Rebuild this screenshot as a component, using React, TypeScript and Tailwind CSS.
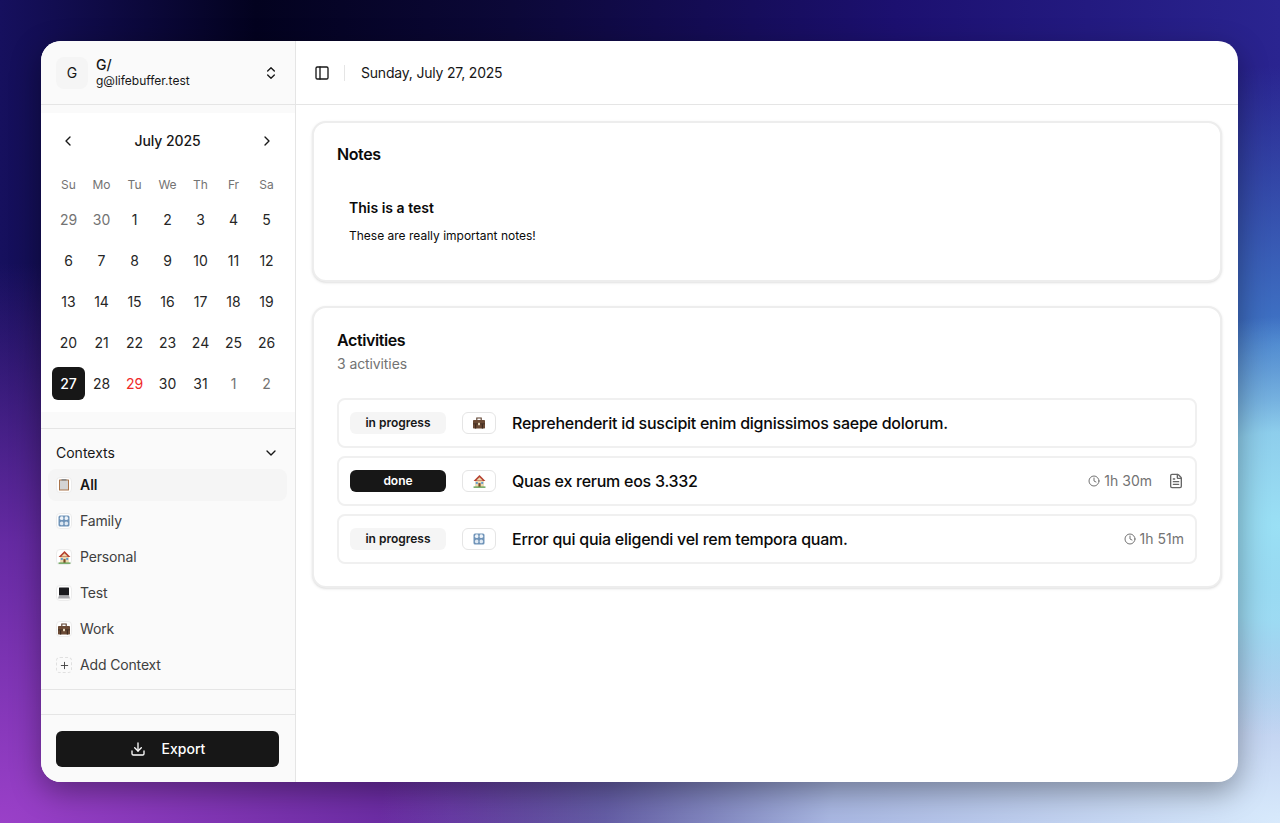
import { ChevronDown, ChevronLeft, ChevronRight, ChevronsUpDown, Clock, Download, FileText, PanelLeft, Plus } from "lucide-react";
import type { ReactNode } from "react";

function Clipboard() {
  return (
    <svg viewBox="0 0 12 12" className="w-[12px] h-[12px]">
      <rect x="1" y="0.5" width="10" height="11" rx="0.6" fill="#a9744a" />
      <rect x="2" y="1.5" width="8" height="9" fill="#d4d4d4" />
      <rect x="3.5" y="0" width="5" height="1.6" fill="#8a8a8a" />
    </svg>
  );
}

function People() {
  return (
    <svg viewBox="0 0 12 12" className="w-[12px] h-[12px]">
      <rect x="0.5" y="0.5" width="11" height="11" rx="1.5" fill="#6f93b8" />
      <circle cx="3.8" cy="3.2" r="1.9" fill="#eef4fa" />
      <circle cx="8.2" cy="3.2" r="1.9" fill="#eef4fa" />
      <circle cx="3.8" cy="8.4" r="1.9" fill="#dfe9f3" />
      <circle cx="8.2" cy="8.4" r="1.9" fill="#dfe9f3" />
      <rect x="5.5" y="1" width="1" height="10" fill="#6f93b8" />
    </svg>
  );
}

function House() {
  return (
    <svg viewBox="0 0 12 12" className="w-[13px] h-[13px]">
      <rect x="2" y="4.5" width="8" height="6.5" fill="#ecd9b0" />
      <path d="M6 0 L11.5 5.5 H0.5 Z" fill="#b5402f" />
      <path d="M6 2 L9 5 H3 Z" fill="#ecd9b0" />
      <rect x="5" y="7.5" width="2" height="3.5" fill="#7a4a28" />
      <rect x="2.6" y="6.4" width="1.8" height="1.8" fill="#5f9bd0" />
      <rect x="7.6" y="6.4" width="1.8" height="1.8" fill="#5f9bd0" />
      <rect x="0.5" y="10.6" width="11" height="1.2" fill="#5a9a4a" />
    </svg>
  );
}

function Laptop() {
  return (
    <svg viewBox="0 0 12 12" className="w-[12px] h-[12px]">
      <rect x="1" y="0.5" width="10" height="8" rx="0.5" fill="#1b1b1f" />
      <path d="M1 8.5 H11 L12 11.5 H0 Z" fill="#a8a8ac" />
    </svg>
  );
}

function Briefcase() {
  return (
    <svg viewBox="0 0 12 12" className="w-[12px] h-[12px]">
      <path d="M3.8 3 V1 H8.2 V3" fill="none" stroke="#5a3d2b" strokeWidth="1.1" />
      <rect x="0" y="3" width="12" height="8.5" rx="0.7" fill="#6b4a35" />
      <rect x="0" y="6.5" width="12" height="0.8" fill="#3d2a1e" />
      <rect x="2" y="7.3" width="1.2" height="4.2" fill="#3d2a1e" />
      <rect x="8.8" y="7.3" width="1.2" height="4.2" fill="#3d2a1e" />
      <rect x="5" y="5.8" width="2" height="2.4" fill="#e0d2b4" />
    </svg>
  );
}

function IconTile({ children, dashed }: { children: ReactNode; dashed?: boolean }) {
  return (
    <div
      className={
        "w-4 h-4 flex items-center justify-center rounded-[4px] border shrink-0 " +
        (dashed ? "border-dashed border-[#e0e0e0] bg-transparent" : "border-[#ececec] bg-white")
      }
    >
      {children}
    </div>
  );
}

const weeks = [
  ["29", "30", "1", "2", "3", "4", "5"],
  ["6", "7", "8", "9", "10", "11", "12"],
  ["13", "14", "15", "16", "17", "18", "19"],
  ["20", "21", "22", "23", "24", "25", "26"],
  ["27", "28", "29", "30", "31", "1", "2"],
];

function Calendar() {
  return (
    <div className="bg-white h-[299px] px-[11px] pt-[11px]">
      <div className="h-[33px] w-[231px] flex items-center justify-between px-[8px] text-[#171717]">
        <ChevronLeft size={16} />
        <div className="text-sm font-medium tracking-[-0.1px]">July 2025</div>
        <ChevronRight size={16} />
      </div>
      <div className="grid grid-cols-7 w-[231px] mt-[18px] h-[20px] items-center text-center text-xs text-[#737373]">
        {["Su", "Mo", "Tu", "We", "Th", "Fr", "Sa"].map((d) => (
          <div key={d}>{d}</div>
        ))}
      </div>
      <div className="flex flex-col gap-2 mt-[8px] w-[231px]">
        {weeks.map((w, i) => (
          <div key={i} className="grid grid-cols-7">
            {w.map((d, j) => {
              const outside = (i === 0 && j < 2) || (i === 4 && j > 4);
              const selected = i === 4 && j === 0;
              const red = i === 4 && j === 2;
              return (
                <div
                  key={j}
                  className={
                    "h-[33px] flex items-center justify-center rounded-md text-sm " +
                    (selected
                      ? "bg-[#171717] text-white font-medium"
                      : red
                        ? "text-[#f02a2a]"
                        : outside
                          ? "text-[#737373]"
                          : "text-[#262626]")
                  }
                >
                  {d}
                </div>
              );
            })}
          </div>
        ))}
      </div>
    </div>
  );
}

const contexts = [
  { name: "Family", icon: <People /> },
  { name: "Personal", icon: <House /> },
  { name: "Test", icon: <Laptop /> },
  { name: "Work", icon: <Briefcase /> },
];

function Sidebar() {
  return (
    <aside className="w-[255px] shrink-0 flex flex-col bg-[#fafafa] border-r border-[#e5e5e5]">
      <div className="h-[64px] shrink-0 flex items-center px-[15px] border-b border-[#e5e5e5]">
        <div className="w-8 h-8 rounded-lg bg-[#f5f5f5] flex items-center justify-center text-sm text-[#171717]">G</div>
        <div className="ml-2 flex-1 leading-none">
          <div className="text-sm font-medium text-[#171717] leading-[17px]">G/</div>
          <div className="text-xs text-[#171717] leading-[16px]">g@lifebuffer.test</div>
        </div>
        <ChevronsUpDown size={16} className="text-[#171717] mr-[1px]" />
      </div>
      <div className="h-[8px] shrink-0" />
      <Calendar />
      <div className="h-[17px] shrink-0 border-b border-[#e5e5e5]" />
      <div className="flex-1 px-[7px] pt-[8px]">
        <div className="h-[32px] flex items-center justify-between px-2 text-sm text-[#171717]">
          <span>Contexts</span>
          <ChevronDown size={16} className="mr-[1px]" />
        </div>
        <div className="flex flex-col gap-[4px] w-[239px]">
          <div className="h-[32px] flex items-center gap-2 px-2 rounded-lg bg-[#f5f5f5] text-sm font-semibold text-[#171717]">
            <IconTile>
              <Clipboard />
            </IconTile>
            All
          </div>
          {contexts.map((c) => (
            <div key={c.name} className="h-[32px] flex items-center gap-2 px-2 text-sm tracking-[-0.15px] text-[#404040]">
              <IconTile>{c.icon}</IconTile>
              {c.name}
            </div>
          ))}
          <div className="h-[32px] flex items-center gap-2 px-2 text-sm tracking-[-0.15px] text-[#404040]">
            <IconTile dashed>
              <Plus size={11} className="text-[#404040]" />
            </IconTile>
            Add Context
          </div>
        </div>
      </div>
      <div className="h-[25px] shrink-0 border-t border-[#e5e5e5]" />
      <div className="h-[68px] shrink-0 border-t border-[#e5e5e5] pl-[15px] pr-[16px] pt-[16px]">
        <div className="h-[36px] rounded-md bg-[#171717] flex items-center justify-center gap-[16px] text-sm font-medium text-white">
          <Download size={16} />
          Export
        </div>
      </div>
    </aside>
  );
}

function ActivityRow({
  status,
  done,
  icon,
  title,
  time,
  note,
}: {
  status: string;
  done?: boolean;
  icon: ReactNode;
  title: string;
  time?: string;
  note?: boolean;
}) {
  return (
    <div className="h-[50px] flex items-center rounded-lg border-2 border-[#f0f0f0] bg-white px-[11px]">
      <div
        className={
          "w-[96px] h-[22px] rounded-md flex items-center justify-center text-xs font-semibold shrink-0 " +
          (done ? "bg-[#171717] text-white" : "bg-[#f5f5f5] text-[#171717]")
        }
      >
        {status}
      </div>
      <div className="ml-4 w-[34px] h-[22px] rounded-md border border-[#e5e5e5] bg-white flex items-center justify-center shrink-0">
        {icon}
      </div>
      <div className="ml-4 flex-1 text-base font-medium tracking-[-0.26px] text-[#0a0a0a]">{title}</div>
      {time && (
        <div className="flex items-center gap-1 text-sm text-[#737373]">
          <Clock size={12} />
          {time}
        </div>
      )}
      {note && <FileText size={16} className="ml-4 text-[#666666]" />}
    </div>
  );
}

export default function App() {
  return (
    <div className="w-[1280px] h-[823px] overflow-hidden pl-[41px] pr-[42px] pt-[41px] pb-[41px] font-['Inter',sans-serif] bg-[radial-gradient(ellipse_260px_210px_at_100%_64%,rgba(154,224,245,1)_0%,rgba(154,224,245,0.85)_45%,rgba(154,224,245,0)_100%),radial-gradient(ellipse_900px_420px_at_100%_100%,rgba(216,234,252,1)_0%,rgba(176,192,232,0.95)_50%,rgba(120,135,190,0.6)_75%,rgba(100,110,170,0)_100%),radial-gradient(ellipse_300px_280px_at_100%_42%,rgba(64,120,200,1)_0%,rgba(64,120,200,0)_100%),radial-gradient(ellipse_900px_560px_at_0%_100%,rgba(154,64,200,1)_0%,rgba(110,45,170,0.9)_50%,rgba(70,30,150,0)_100%),linear-gradient(90deg,#16105e_0%,#03021f_20%,#0c0838_40%,#1c1070_70%,#2a2490_100%)]">
      <div className="h-full flex rounded-[20px] overflow-hidden bg-white shadow-[0_10px_30px_rgba(0,0,0,0.35)]">
        <Sidebar />
        <main className="flex-1 flex flex-col min-w-0">
          <div className="h-[64px] shrink-0 flex items-center border-b border-[#e5e5e5] pl-[18px]">
            <PanelLeft size={16} className="text-[#171717]" />
            <div className="w-px h-[16px] bg-[#e5e5e5] ml-[14px]" />
            <div className="ml-4 text-sm tracking-[-0.2px] text-[#171717]">Sunday, July 27, 2025</div>
          </div>
          <div className="flex flex-col gap-[24px] px-4 pt-4">
            <section className="h-[161px] rounded-[14px] border-2 border-[#ededed] bg-white px-[23px] pt-[21px] shadow-sm">
              <div className="text-base font-semibold tracking-[-0.4px] leading-[20px] text-[#0a0a0a]">Notes</div>
              <div className="mt-[34px] ml-[12px] text-sm font-semibold leading-[20px] text-[#0a0a0a]">This is a test</div>
              <div className="mt-[8px] ml-[12px] text-xs leading-[20px] text-[#0a0a0a]">These are really important notes!</div>
            </section>
            <section className="h-[282px] rounded-[14px] border-2 border-[#ededed] bg-white px-[23px] pt-[22px] shadow-sm">
              <div className="text-base font-semibold tracking-[-0.4px] leading-[20px] text-[#0a0a0a]">Activities</div>
              <div className="mt-[4px] text-sm tracking-[-0.1px] leading-[20px] text-[#737373]">3 activities</div>
              <div className="mt-[24px] flex flex-col gap-[8px]">
                <ActivityRow
                  status="in progress"
                  icon={<Briefcase />}
                  title="Reprehenderit id suscipit enim dignissimos saepe dolorum."
                />
                <ActivityRow status="done" done icon={<House />} title="Quas ex rerum eos 3.332" time="1h 30m" note />
                <ActivityRow
                  status="in progress"
                  icon={<People />}
                  title="Error qui quia eligendi vel rem tempora quam."
                  time="1h 51m"
                />
              </div>
            </section>
          </div>
        </main>
      </div>
    </div>
  );
}
